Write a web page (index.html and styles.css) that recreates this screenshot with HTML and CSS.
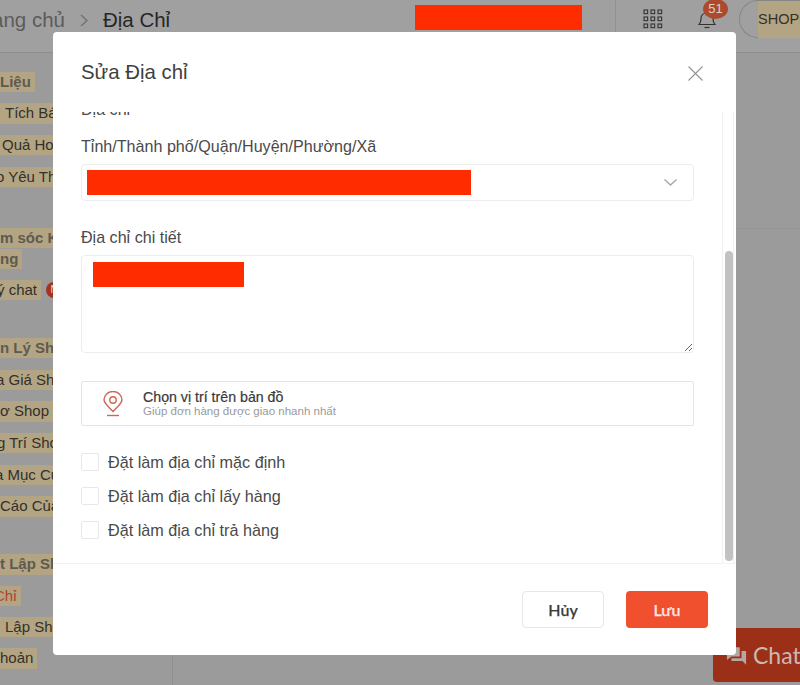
FILE: index.html
```html
<!DOCTYPE html>
<html lang="vi">
<head>
<meta charset="utf-8">
<title>Địa Chỉ</title>
<link rel="stylesheet" href="styles.css">
</head>
<body>
<div class="page">
  <header class="topbar">
    <nav class="crumbs"><span class="crumb-home">ang chủ</span>
      <svg class="crumb-sep" width="8" height="13" viewBox="0 0 8 13" fill="none" stroke="#6f6f6f" stroke-width="1.300"><path d="M1 1l6 5.500L1 12"/></svg>
      <span class="crumb-now">Địa Chỉ</span></nav>
    <div class="redact top-redact"></div>
    <div class="top-tools">
      <svg class="grid-icon" width="20" height="20" viewBox="0 0 20 20" fill="none" stroke="#3a3a3a" stroke-width="1.200">
        <rect x="1" y="1" width="3.600" height="3.600"/><rect x="8" y="1" width="3.600" height="3.600"/><rect x="15" y="1" width="3.600" height="3.600"/>
        <rect x="1" y="8" width="3.600" height="3.600"/><rect x="8" y="8" width="3.600" height="3.600"/><rect x="15" y="8" width="3.600" height="3.600"/>
        <rect x="1" y="15" width="3.600" height="3.600"/><rect x="8" y="15" width="3.600" height="3.600"/><rect x="15" y="15" width="3.600" height="3.600"/>
      </svg>
      <div class="bell">
        <svg width="18" height="20" viewBox="0 0 18 20" fill="none" stroke="#333" stroke-width="1.200"><path d="M1 15.500h16c-1.500-1.500-2-3-2-6 0-3.500-2.500-5.500-6-5.500S3 6 3 9.500c0 3-.5 4.500-2 6z"/><path d="M6.500 18.500h5"/></svg>
        <span class="badge">51</span>
      </div>
      <div class="pill"><span class="mark">SHOPEE</span></div>
    </div>
  </header>
  <div class="layout">
    <aside class="sidebar">
      <div class="group">
        <div class="row head"><span class="mark">Liệu</span></div>
        <div class="row"><span class="mark ind-5">Tích Bán Hàng</span></div>
        <div class="row"><span class="mark ind-2">Quả Hoạt Động</span></div>
        <div class="row cut-4"><span class="mark">o Yêu Thích</span></div>
      </div>
      <div class="group care">
        <div class="row head tight"><span class="mark">m sóc Khách</span></div>
        <div class="row head tight"><span class="mark">ng</span></div>
        <div class="row cut-3"><span class="mark">ý chat</span><span class="dot">N</span></div>
      </div>
      <div class="group">
        <div class="row head"><span class="mark">n Lý Shop</span></div>
        <div class="row cut-4"><span class="mark">a Giá Shop</span></div>
        <div class="row"><span class="mark">ơ Shop</span></div>
        <div class="row cut-3"><span class="mark">g Trí Shop</span></div>
        <div class="row cut-5"><span class="mark">a Mục Của Shop</span></div>
        <div class="row"><span class="mark">Cáo Của Shop</span></div>
      </div>
      <div class="group settings">
        <div class="row head"><span class="mark">t Lập Shop</span></div>
        <div class="row cut-6"><span class="mark current">Chỉ</span></div>
        <div class="row"><span class="mark ind-5">Lập Shop</span></div>
        <div class="row"><span class="mark">hoản</span></div>
      </div>
    </aside>
    <main class="content"><div class="content-top"></div></main>
  </div>
</div>

<div class="chat"><svg width="21" height="19" viewBox="0 0 23 20" fill="#b5a8a4"><path d="M1 1h14v10H6l-5 4z"/><path d="M17 5h5v15l-4-4H6v-3h11z"/></svg><span>Chat</span></div>

<section class="modal">
  <header class="modal-head">
    <h2>Sửa Địa chỉ</h2>
    <svg class="close" width="15" height="15" viewBox="0 0 15 15" stroke="#949494" stroke-width="1.100" fill="none"><path d="M.5.500l14 14M14.500.500l-14 14"/></svg>
  </header>
  <div class="modal-body">
    <div class="scroll">
      <label class="field-label first">Địa chỉ</label>
      <label class="field-label second">Tỉnh/Thành phố/Quận/Huyện/Phường/Xã</label>
      <div class="select">
        <div class="redact select-redact"></div>
        <svg width="13" height="7" viewBox="0 0 13 7" fill="none" stroke="#a8a8a8" stroke-width="1.400"><path d="M.5.500l6 5.500 6-5.500"/></svg>
      </div>
      <label class="field-label third">Địa chỉ chi tiết</label>
      <div class="text-wrap">
        <textarea class="detail" aria-label="Địa chỉ chi tiết"></textarea>
        <div class="redact detail-redact"></div>
      </div>
      <div class="map-pick">
        <svg width="20" height="26" viewBox="0 0 20 26" fill="none" stroke="#cf6650" stroke-width="1.400"><path d="M10 20.500C6 16 1 12.500 1 8.800A9 8.300 0 0 1 19 8.800C19 12.500 14 16 10 20.500z"/><circle cx="10" cy="9" r="3.200"/><path d="M4 24.500h12"/></svg>
        <div class="map-text"><strong>Chọn vị trí trên bản đồ</strong><small>Giúp đơn hàng được giao nhanh nhất</small></div>
      </div>
      <div class="checks">
        <label class="check"><span class="box"></span>Đặt làm địa chỉ mặc định</label>
        <label class="check"><span class="box"></span>Đặt làm địa chỉ lấy hàng</label>
        <label class="check"><span class="box"></span>Đặt làm địa chỉ trả hàng</label>
      </div>
    </div>
    <div class="track"><div class="thumb"></div></div>
  </div>
  <footer class="modal-foot">
    <button class="btn cancel">Hủy</button>
    <button class="btn save">Lưu</button>
  </footer>
</section>
</body>
</html>
```
FILE: styles.css
```css
* { box-sizing: border-box; }
html, body { margin: 0; height: 100%; overflow: hidden; }
body { background: #9b9b9b; font-family: "Liberation Sans", Arial, sans-serif; color: #333; }
.page { height: 685px; display: flex; flex-direction: column; }

.topbar { height: 53px; flex: none; display: flex; align-items: flex-start; overflow: hidden; border-bottom: 1px solid #8f8f8f; background: #a0a0a0; }
.crumbs { display: flex; align-items: center; width: 423px; flex: none; margin-left: -8px; height: 40px; font-size: 20.500px; }
.crumb-home { color: #5c5c5c; }
.crumb-sep { margin: 0 15px; flex: none; }
.crumb-now { color: #262626; }
.redact { background: #ff2c00; }
.top-redact { width: 167px; height: 25px; flex: none; margin-top: 5px; }
.top-tools { margin-left: 33px; height: 100%; flex: 1; min-width: 0; display: flex; align-items: center; border-left: 1px solid #919191; padding: 0 0 14px 27px; overflow: hidden; }
.grid-icon { flex: none; }
.bell { position: relative; flex: none; margin-left: 35px; width: 18px; height: 20px; }
.badge { position: absolute; left: 5px; top: -10px; width: 25px; height: 20px; border-radius: 50%; background: #ae4a2c; color: #d8d0cb; font-size: 13px; line-height: 20px; text-align: center; }
.pill { flex: none; margin-left: 23px; width: 80px; height: 38px; border: 1px solid #858585; border-right: 0; border-radius: 19px 0 0 19px; padding-left: 18px; font-size: 14.500px; white-space: nowrap; }
.pill .mark { display: block; height: 37px; line-height: 37px; padding: 0; }

.mark { background: #b3a583; color: #33302a; padding: 0 4px 0 0; line-height: 20.500px; }
.layout { flex: 1; display: flex; min-height: 0; }
.sidebar { width: 173px; flex: none; border-right: 1px solid #8f8f8f; padding-top: 13px; font-size: 15px; overflow: hidden; }
.group { margin-bottom: 26.400px; }
.care { margin-top: 34.500px; }
.row { height: 31.700px; white-space: nowrap; display: flex; align-items: center; }
.row.tight { height: 21px; }
.row.tight + .row.tight { margin-bottom: 5px; }
.settings .row { height: 31.300px; }
.row.head { font-weight: bold; }
.row.head .mark { color: #5f5a4f; }
.ind-5 { padding-left: 5px; }
.ind-2 { padding-left: 2px; }
.cut-3 { margin-left: -3px; }
.cut-4 { margin-left: -4px; }
.cut-5 { margin-left: -5px; }
.cut-6 { margin-left: -6px; }
.row .current { color: #b2412a; }
.dot { flex: none; margin-left: 5px; width: 16px; height: 16px; border-radius: 50%; background: #a5321e; color: #ddd; font-size: 10px; line-height: 16px; text-align: center; }
.content { flex: 1; }
.content-top { height: 176px; border-bottom: 1px solid #959595; }

.chat { position: absolute; left: 713px; top: 628px; width: 87px; height: 54px; overflow: hidden; background: #9b2f17; border-radius: 4px 0 0 4px; display: flex; align-items: center; padding: 0 0 0 13px; gap: 6px; color: #c9b9b4; font-family: Lato, sans-serif; font-size: 23px; }
.chat svg { flex: none; }

.modal { position: absolute; left: 53px; top: 32px; width: 683px; height: 623px; background: #fff; border-radius: 4px; display: flex; flex-direction: column; }
.modal-head { height: 80px; flex: none; display: flex; align-items: center; justify-content: space-between; padding: 0 33px 0 28px; }
.modal-head h2 { margin: 0; font-size: 20.400px; font-weight: normal; color: #3f3f3f; }
.close { margin-top: 3px; }
.modal-body { flex: 1; min-height: 0; display: flex; padding-right: 2px; }
.scroll { flex: 1; min-width: 0; height: 100%; padding: 0 28px; overflow: hidden; }
.field-label { display: block; font-size: 16.100px; line-height: 18px; color: #4a4a4a; }
.first { margin-top: -12px; }
.second { margin-top: 19px; }
.third { margin-top: 27px; }
.select { height: 37px; margin-top: 9px; border: 1px solid #ececec; border-radius: 4px; display: flex; align-items: center; justify-content: space-between; padding: 0 16px 0 5px; }
.select-redact { width: 384px; height: 25px; }
.text-wrap { position: relative; margin-top: 9px; height: 98px; }
.detail { display: block; width: 100%; height: 98px; border: 1px solid #ececec; border-radius: 4px; background: #fff; outline: none; margin: 0; padding: 0; }
.detail-redact { position: absolute; left: 12px; top: 7px; width: 151px; height: 25px; }
.map-pick { height: 45px; margin-top: 28px; border: 1px solid #e4e4e4; border-radius: 2px; display: flex; align-items: center; padding-left: 21px; gap: 20px; }
.map-text { display: flex; flex-direction: column; }
.map-text strong { font-size: 14.200px; line-height: 16px; font-weight: normal; color: #3a3a3a; -webkit-text-stroke: .2px #3a3a3a; }
.map-text small { font-size: 11.500px; line-height: 13px; color: #9a9a9a; }
.checks { margin-top: 27px; display: flex; flex-direction: column; gap: 16px; }
.check { display: flex; align-items: center; gap: 9px; height: 18px; font-size: 16.200px; color: #4a4a4a; }
.box { width: 18px; height: 18px; border: 1px solid #e8e8e8; border-radius: 2px; flex: none; }
.track { width: 12px; flex: none; border-left: 1px solid #f0f0f0; border-right: 1px solid #f0f0f0; padding: 139px 1px 1px 2px; }
.thumb { width: 8px; height: 310px; background: #c2c2c2; border-radius: 4px; }
.modal-foot { height: 92px; flex: none; border-top: 1px solid #f3f3f3; display: flex; justify-content: flex-end; align-items: flex-start; gap: 22px; padding: 27px 28px 0 0; }
.btn { width: 82px; height: 37px; border-radius: 4px; font-family: Lato, "Open Sans", sans-serif; font-size: 16px; font-weight: 500; padding: 0; -webkit-text-stroke: .25px currentColor; }
.cancel { background: #fff; border: 1px solid #e6e6e6; color: #3a3a3a; }
.save { background: #f1502e; border: 0; color: #fbe9e4; }
```
